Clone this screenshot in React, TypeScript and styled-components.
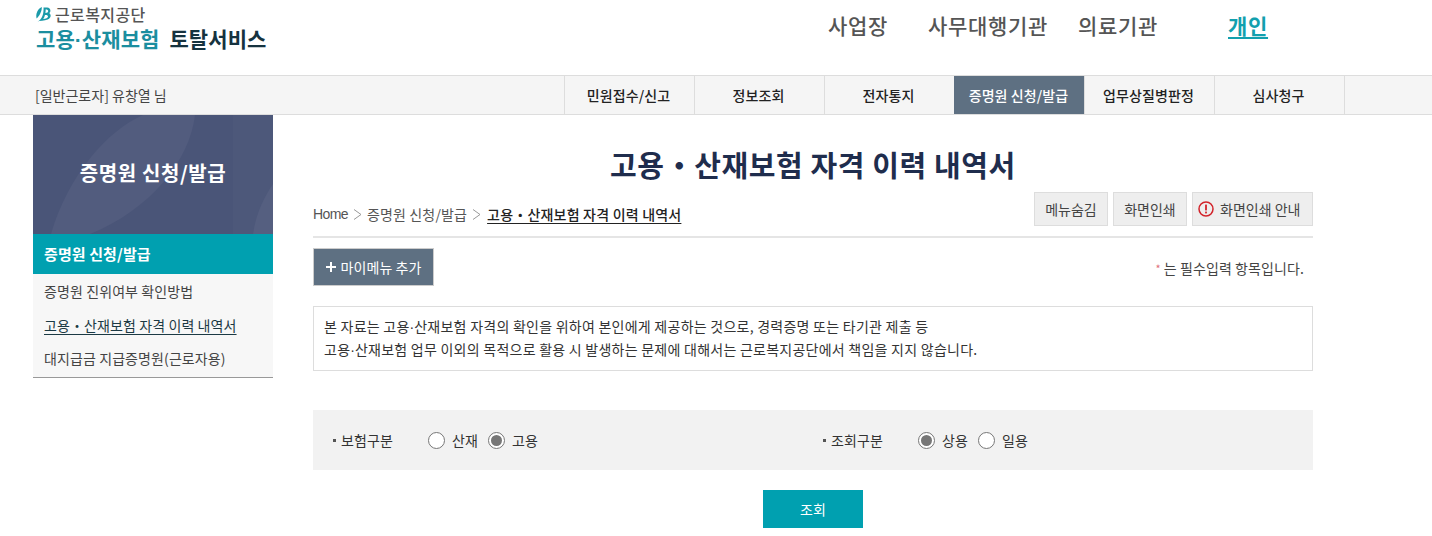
import React from "react";
import styled, { createGlobalStyle } from "styled-components";

const Global = createGlobalStyle`
  html, body { margin: 0; padding: 0; background: #fff; overflow: hidden; }
  body { font-family: "Noto Sans CJK KR", "Noto Sans", sans-serif; color: #333; font-size: 14px; letter-spacing: -0.3px; }
  a { color: inherit; text-decoration: none; }
`;

const Page = styled.div`width: 1432px; height: 536px; overflow: hidden;`;

const Header = styled.header`
  height: 75px; display: flex; position: relative; padding-left: 35px; box-sizing: border-box;
`;
const Brand = styled.div`width: 793px; padding-top: 4px;`;
const OrgLine = styled.div`
  display: flex; align-items: center; gap: 4px; height: 20px; margin-left: 1px;
  font-size: 16px; line-height: 18px; color: #555; font-weight: 500; letter-spacing: 0.4px;
`;
const ServiceLine = styled.div`
  font-size: 21px; line-height: 28px; margin-top: 0; font-weight: 700; color: #16333f; letter-spacing: 0.1px; margin-left: 1px; white-space: nowrap;
`;
const Teal = styled.span`color: #1b8e9f; margin-right: 5px;`;
const NarrowDot = styled.span`font-family: "Liberation Sans", sans-serif; letter-spacing: 0;`;
const TopNav = styled.nav`display: flex; padding-top: 9px; height: 32px; line-height: 32px; font-size: 21px; font-weight: 500; color: #555; letter-spacing: 0.7px;`;
const TopLink = styled.a<{ $w: number; $active?: boolean }>`
  display: block; width: ${p => p.$w}px; white-space: nowrap;
  ${p => p.$active ? "color:#12a0ae;text-decoration:underline;text-underline-offset:3px;font-weight:700;" : ""}
`;

const Bar = styled.div`
  height: 40px; box-sizing: border-box; background: #f5f5f5;
  border-top: 1px solid #ddd; border-bottom: 1px solid #ddd;
  display: flex; padding-left: 35px;
`;
const UserName = styled.div`width: 529px; font-size: 14px; line-height: 38px; color: #444; letter-spacing: 0;`;
const Tabs = styled.div`display: flex; border-right: 1px solid #ddd; height: 38px;`;
const Tab = styled.a<{ $active?: boolean }>`
  width: 127px; padding-right: 2px; border-left: 1px solid ${p => p.$active ? "#5e7082" : "#ddd"}; text-align: center; font-size: 14px; line-height: 39px; font-weight: 500; color: ${p => p.$active ? "#fff" : "#222"};
  background: ${p => p.$active ? "#5e7082" : "transparent"};
  letter-spacing: 0.1px; white-space: nowrap;
`;

const Body = styled.div`display: flex; padding-left: 33px; gap: 40px;`;
const Side = styled.aside`width: 240px; flex: none;`;
const Hero = styled.div`
  height: 119px; position: relative; overflow: hidden; background: #4a5578;
  display: flex; align-items: center; justify-content: center; color: #fff;
  font-size: 20px; font-weight: 700; letter-spacing: 0.6px;
`;
const HeroArt = styled.svg`position: absolute; inset: 0; width: 100%; height: 100%;`;
const HeroText = styled.span`position: relative; top: -2px;`;
const SideHead = styled.div`
  height: 40px; background: #00a0b0; color: #fff; font-weight: 700; font-size: 15px; line-height: 40px; padding-left: 11px;
  letter-spacing: 0.1px;
`;
const SideList = styled.ul`
  list-style: none; margin: 0; padding: 0 0 0 11px; background: #f7f7f7; height: 103px; border-bottom: 1px solid #999;
`;
const SideItem = styled.li<{ $active?: boolean }>`
  height: 34px; line-height: 34px; font-size: 14px; color: #444; white-space: nowrap; letter-spacing: 0.1px;
  &:last-child { line-height: 33px; }
  ${p => p.$active ? "color:#1c3a44;text-decoration:underline;text-underline-offset:3px;" : ""}
`;

const Main = styled.main`width: 1000px; flex: none;`;
const Title = styled.h1`
  margin: 0; height: 78px; padding-top: 27px; box-sizing: border-box; text-align: center; font-size: 29px; line-height: 44px; font-weight: 700; color: #1f2d4d; letter-spacing: 0.6px; white-space: nowrap;
`;
const Crumbs = styled.div`
  height: 45px; box-sizing: border-box; border-bottom: 2px solid #e5e5e5; display: flex; justify-content: space-between;
`;
const Trail = styled.div`display: flex; align-items: center; height: 42px; font-size: 14px; color: #555; letter-spacing: 0.15px;`;
const HomeText = styled.span`font-family: "Liberation Sans", sans-serif; font-size: 14px; letter-spacing: -0.6px;`;
const Sep = styled.svg<{ $gap: number }>`width: 9px; height: 11px; margin: 0 ${p => p.$gap}px 0 5px; flex: none;`;
const Current = styled.a`color: #222; font-weight: 500; text-decoration: underline; text-underline-offset: 3px; letter-spacing: 0.2px;`;
const Tools = styled.div`display: flex; gap: 5px; height: 34px; margin-top: -1px;`;
const ToolBtn = styled.button`
  width: 74px; height: 34px; box-sizing: border-box; border: 1px solid #ddd; background: #eee; padding: 0;
  font: inherit; font-size: 14px; color: #444; display: flex; align-items: center; justify-content: center; letter-spacing: 0;
`;
const GuideBtn = styled(ToolBtn)`width: 121px; justify-content: flex-start; padding-left: 5px; gap: 6px;`;
const Warn = styled.svg`width: 16px; height: 16px; flex: none;`;

const ActionRow = styled.div`display: flex; justify-content: space-between; height: 68px; padding-top: 10px; box-sizing: border-box;`;
const MyMenu = styled.button`
  width: 121px; height: 38px; box-sizing: border-box; border: 1px solid #ccc; background: #5e7082; color: #fff; font: inherit; font-size: 14px; display: flex; align-items: center; justify-content: center; gap: 5px; padding: 0; letter-spacing: 0.05px;
`;
const Required = styled.div`font-size: 14px; line-height: 20px; padding: 10px 9px 0 0; color: #444; letter-spacing: 0.1px; display: flex;`;
const Star = styled.span`color: #e0707a; font-size: 11px; margin-right: 3px;`;

const Notice = styled.div`
  height: 65px; box-sizing: border-box; border: 1px solid #ddd; padding: 8px 10px; font-size: 14px; line-height: 22px; color: #333; letter-spacing: 0.25px; white-space: nowrap;
`;
const SearchBox = styled.div`
  margin-top: 39px; height: 60px; background: #f2f2f2; display: flex; align-items: center; padding-left: 20px; font-size: 14px; color: #333;
`;
const Group = styled.div`display: flex; align-items: center; width: 490px;`;
const Label = styled.div`width: 95px; display: flex; align-items: center; gap: 5px; font-size: 14px; letter-spacing: 0.1px;`;
const Bullet = styled.i`width: 3px; height: 3px; background: #555; flex: none;`;
const Opt = styled.label`display: flex; align-items: center; gap: 7px; margin-right: 10px; font-size: 14px; letter-spacing: 0.1px;`;
const Radio = styled.span<{ $on?: boolean }>`
  width: 17px; height: 17px; box-sizing: border-box; border: 1px solid #777; border-radius: 50%; background: #fff; display: flex; align-items: center; justify-content: center;
  &::after { content: ""; width: 11px; height: 11px; border-radius: 50%; background: ${p => p.$on ? "#777" : "transparent"}; }
`;
const Submit = styled.div`display: flex; justify-content: center; margin-top: 20px;`;
const SubmitBtn = styled.button`
  width: 100px; height: 38px; border: 0; background: #00a0b0; color: #fff; font: inherit; font-size: 14px;
`;

const LogoMark = () => (
  <svg width="15" height="15" viewBox="0 0 15 15">
    <path d="M5.800 0C6 4 3.500 9 .6 11.500-.6 7 1.500 2 5.800 0z" fill="#1b9aa9" />
    <path d="M7.500 .6h3.600c3.400 0 4.400 3.900 2 5.500 2.300 1.300 2.200 5.100-1.300 6.500-3.400 1.300-8 .9-11.300 2.400C5 14 8 8 7.500 .6zM9.600 2.500c.1 1.300 0 2.500-.2 3.600 1.900-.1 2.800-.9 2.800-2 0-1-.9-1.700-2.600-1.600zM9 8c-.4 1.600-1 2.900-1.800 3.900 2.600-.2 4.700-1 4.800-2.400.1-1-1.100-1.700-3-1.500z" fill="#1b9aa9" fillRule="evenodd" />
  </svg>
);
const Chevron = ({ gap }: { gap: number }) => (
  <Sep $gap={gap} viewBox="0 0 9 11"><path d="M1 .5 8 5.500 1 10.500" fill="none" stroke="#999" strokeWidth="1" /></Sep>
);

export default function App() {
  return (
    <Page>
      <Global />
      <Header>
        <Brand>
          <OrgLine><LogoMark />근로복지공단</OrgLine>
          <ServiceLine><Teal>고용<NarrowDot>·</NarrowDot>산재보험</Teal> 토탈서비스</ServiceLine>
        </Brand>
        <TopNav>
          <TopLink $w={100}>사업장</TopLink>
          <TopLink $w={150}>사무대행기관</TopLink>
          <TopLink $w={150}>의료기관</TopLink>
          <TopLink $w={60} $active>개인</TopLink>
        </TopNav>
      </Header>
      <Bar>
        <UserName>[일반근로자] 유창열 님</UserName>
        <Tabs>
          <Tab>민원접수/신고</Tab>
          <Tab>정보조회</Tab>
          <Tab>전자통지</Tab>
          <Tab $active>증명원 신청/발급</Tab>
          <Tab>업무상질병판정</Tab>
          <Tab>심사청구</Tab>
        </Tabs>
      </Bar>
      <Body>
        <Side>
          <Hero>
            <HeroArt viewBox="0 0 240 119" preserveAspectRatio="none">
              <path d="M18 119C35 60 75 15 110 0h52c-5 45-45 95-105 119z" fill="#525c7e" />
              <path d="M220 119c3-20 10-35 20-50v50z" fill="#525c7e" />
              <rect x="200" y="0" width="40" height="119" fill="#ffffff" opacity="0.02" />
            </HeroArt>
            <HeroText>증명원 신청/발급</HeroText>
          </Hero>
          <SideHead>증명원 신청/발급</SideHead>
          <SideList>
            <SideItem>증명원 진위여부 확인방법</SideItem>
            <SideItem $active>고용・산재보험 자격 이력 내역서</SideItem>
            <SideItem>대지급금 지급증명원(근로자용)</SideItem>
          </SideList>
        </Side>
        <Main>
          <Title>고용・산재보험 자격 이력 내역서</Title>
          <Crumbs>
            <Trail>
              <HomeText>Home</HomeText><Chevron gap={5} />증명원 신청/발급<Chevron gap={6} /><Current>고용・산재보험 자격 이력 내역서</Current>
            </Trail>
            <Tools>
              <ToolBtn>메뉴숨김</ToolBtn>
              <ToolBtn>화면인쇄</ToolBtn>
              <GuideBtn>
                <Warn viewBox="0 0 16 16">
                  <circle cx="8" cy="8" r="7" fill="none" stroke="#d2232a" strokeWidth="1.500" />
                  <rect x="7.100" y="3.600" width="1.800" height="5.800" fill="#d2232a" />
                  <rect x="7.100" y="10.600" width="1.800" height="1.800" fill="#d2232a" />
                </Warn>
                화면인쇄 안내
              </GuideBtn>
            </Tools>
          </Crumbs>
          <ActionRow>
            <MyMenu>
              <svg width="10" height="10" viewBox="0 0 10 10"><path d="M5 0v10M0 5h10" stroke="#fff" strokeWidth="2" /></svg>
              마이메뉴 추가
            </MyMenu>
            <Required><Star>*</Star>는 필수입력 항목입니다.</Required>
          </ActionRow>
          <Notice>
            본 자료는 고용<NarrowDot>·</NarrowDot>산재보험 자격의 확인을 위하여 본인에게 제공하는 것으로, 경력증명 또는 타기관 제출 등<br />
            고용<NarrowDot>·</NarrowDot>산재보험 업무 이외의 목적으로 활용 시 발생하는 문제에 대해서는 근로복지공단에서 책임을 지지 않습니다.
          </Notice>
          <SearchBox>
            <Group>
              <Label><Bullet />보험구분</Label>
              <Opt><Radio />산재</Opt>
              <Opt><Radio $on />고용</Opt>
            </Group>
            <Group>
              <Label><Bullet />조회구분</Label>
              <Opt><Radio $on />상용</Opt>
              <Opt><Radio />일용</Opt>
            </Group>
          </SearchBox>
          <Submit><SubmitBtn>조회</SubmitBtn></Submit>
        </Main>
      </Body>
    </Page>
  );
}
